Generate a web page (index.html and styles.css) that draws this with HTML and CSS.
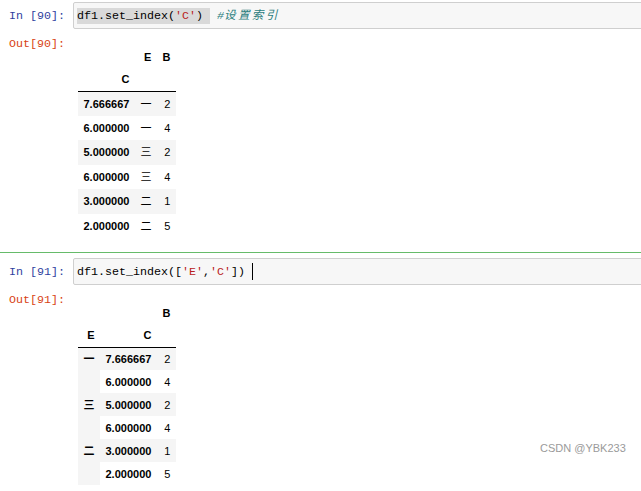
FILE: index.html
```html
<!DOCTYPE html>
<html>
<head>
<meta charset="utf-8">
<link rel="stylesheet" href="styles.css">
</head>
<body>
<div class="nb">
  <div class="cell first">
    <div class="in-row">
      <div class="prompt in">In [90]:</div>
      <div class="input"><div class="code"><span class="sel">df1.set_index(<span class="s">'C'</span>) </span> <span class="c">#<span class="cjk">设置索引</span></span></div></div>
    </div>
    <div class="out-row">
      <div class="prompt out">Out[90]:</div>
      <div class="output">
        <table class="df df1">
          <thead>
            <tr class="h1"><th></th><th>E</th><th>B</th></tr>
            <tr class="h2"><th>C</th><th></th><th></th></tr>
          </thead>
          <tbody>
            <tr><th>7.666667</th><td>一</td><td>2</td></tr>
            <tr><th>6.000000</th><td>一</td><td>4</td></tr>
            <tr><th>5.000000</th><td>三</td><td>2</td></tr>
            <tr><th>6.000000</th><td>三</td><td>4</td></tr>
            <tr><th>3.000000</th><td>二</td><td>1</td></tr>
            <tr><th>2.000000</th><td>二</td><td>5</td></tr>
          </tbody>
        </table>
      </div>
    </div>
  </div>
  <div class="cell selected">
    <div class="in-row">
      <div class="prompt in">In [91]:</div>
      <div class="input"><div class="code">df1.set_index([<span class="s">'E'</span>,<span class="s">'C'</span>]) <span class="cursor"></span></div></div>
    </div>
    <div class="out-row">
      <div class="prompt out">Out[91]:</div>
      <div class="output">
        <table class="df df2">
          <thead>
            <tr class="h1"><th></th><th></th><th>B</th></tr>
            <tr class="h2"><th>E</th><th>C</th><th></th></tr>
          </thead>
          <tbody>
            <tr><th rowspan="2" class="lvl0">一</th><th>7.666667</th><td>2</td></tr>
            <tr><th>6.000000</th><td>4</td></tr>
            <tr><th rowspan="2" class="lvl0">三</th><th>5.000000</th><td>2</td></tr>
            <tr><th>6.000000</th><td>4</td></tr>
            <tr><th rowspan="2" class="lvl0">二</th><th>3.000000</th><td>1</td></tr>
            <tr><th>2.000000</th><td>5</td></tr>
          </tbody>
        </table>
      </div>
    </div>
  </div>
</div>
<div class="watermark">CSDN @YBK233</div>
</body>
</html>
```

FILE: styles.css
```css
html, body {
  margin: 0;
  padding: 0;
  overflow: hidden;
  background: #fff;
}
body {
  font-family: "Liberation Sans", Arial, sans-serif;
  position: relative;
  width: 641px;
  height: 491px;
}
.nb {
  display: flex;
  flex-direction: column;
}
.cell {
  padding: 5px 0 14px 0;
  border-top: 1px solid transparent;
}
.cell.first {
  padding-top: 1px;
}
.cell.selected {
  border-top-color: #66bb6a;
}
.in-row, .out-row {
  display: flex;
  align-items: flex-start;
}
.out-row {
  padding-top: 1px;
}
.prompt {
  width: 65px;
  padding-right: 8px;
  text-align: right;
  white-space: pre;
  font-family: "Liberation Mono", "Courier New", monospace;
  font-size: 11.67px;
  flex: none;
}
.prompt.in {
  color: #303f9f;
  line-height: 16px;
  padding-top: 6px;
}
.prompt.out {
  color: #d84315;
  line-height: 14px;
  padding-top: 7px;
}
.input {
  flex: 1;
  margin-right: -4px;
  border: 1px solid #cfcfcf;
  border-radius: 2px;
  background: #f7f7f7;
  padding: 5px 3px 4px 3px;
}
.code {
  font-family: "Liberation Mono", "Courier New", "Noto Sans CJK SC", monospace;
  font-size: 11.67px;
  line-height: 16px;
  height: 16px;
  white-space: pre;
  color: #000;
}
.sel {
  display: inline-block;
  background: #d9d9d9;
  line-height: 16px;
  vertical-align: top;
}
.s {
  color: #ba2121;
}
.c {
  color: #2a7d7d;
  font-style: italic;
}
.cjk {
  letter-spacing: 2.3px;
}
.cursor {
  display: inline-block;
  width: 0;
  height: 17px;
  border-left: 1px solid #000;
  vertical-align: top;
  margin-top: -1px;
}
.output {
  flex: 1;
  padding-left: 5px;
}
.df {
  border-collapse: collapse;
  border-spacing: 0;
  margin-top: 16px;
  font-family: "Liberation Sans", Arial, "Noto Sans CJK SC", sans-serif;
  font-size: 11px;
  color: #000;
}
.df th, .df td {
  padding: 0 5.5px;
  text-align: right;
  vertical-align: middle;
  line-height: 12px;
  white-space: nowrap;
}
.df th {
  font-weight: bold;
}
.df td {
  font-weight: normal;
}
.df thead tr.h1 {
  height: 22px;
}
.df thead tr.h2 {
  height: 23px;
}
.df thead tr.h2 th {
  border-bottom: 1px solid #000;
}
.df tbody tr:nth-child(odd) {
  background: #f5f5f5;
}
.df1 tbody tr {
  height: 24.5px;
}
.df2 tbody tr {
  height: 23px;
}
.df2 tbody th.lvl0 {
  vertical-align: top;
  padding-top: 5.5px;
  background: #f5f5f5;
}
.watermark {
  position: absolute;
  left: 540px;
  top: 441px;
  font-family: "Liberation Sans", Arial, sans-serif;
  font-size: 11px;
  line-height: 14px;
  color: #9a9a9a;
}
```
